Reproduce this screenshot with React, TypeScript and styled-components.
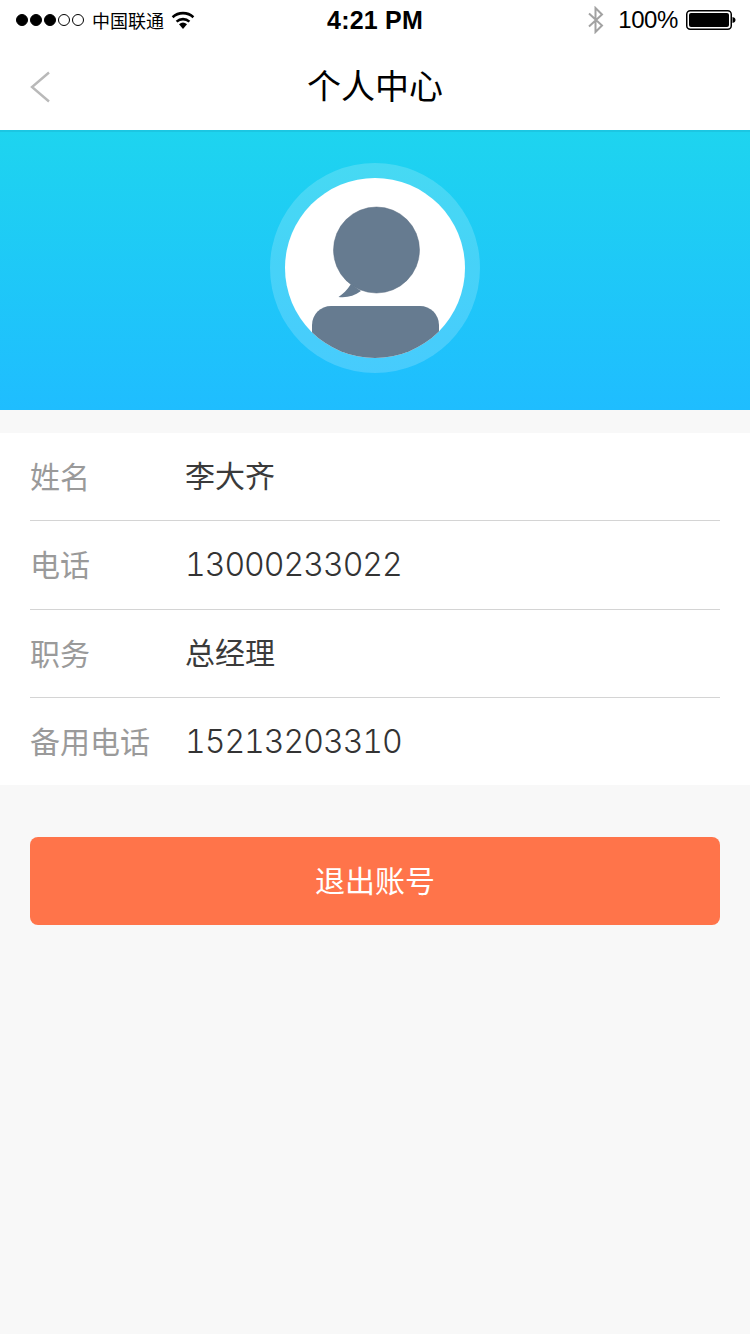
import React from 'react';
import styled, { createGlobalStyle } from 'styled-components';

const GlobalStyle = createGlobalStyle`
  html, body {
    margin: 0;
    padding: 0;
    background: #f8f8f8;
  }
  body {
    font-family: "Liberation Sans", "Noto Sans CJK SC", sans-serif;
  }
`;

const Page = styled.div`
  width: 750px;
  height: 1334px;
  background: #f8f8f8;
  overflow: hidden;
`;

const StatusBar = styled.div`
  height: 40px;
  background: #fff;
  display: grid;
  grid-template-columns: 1fr auto 1fr;
  align-items: center;
  padding: 0 14px 0 16px;
  color: #000;
`;

const StatusLeft = styled.div`
  display: flex;
  align-items: center;
`;

const StatusRight = styled.div`
  display: flex;
  align-items: center;
  justify-content: flex-end;
`;

const Signal = styled.div`
  display: flex;
  gap: 2px;
  margin-right: 8px;
`;

const Dot = styled.span<{ $on: boolean }>`
  width: 12px;
  height: 12px;
  box-sizing: border-box;
  border-radius: 50%;
  border: 1px solid #000;
  background: ${(p) => (p.$on ? '#000' : 'transparent')};
`;

const Carrier = styled.span`
  font-size: 18px;
  margin-right: 7px;
`;

const Clock = styled.span`
  font-size: 25px;
  font-weight: 700;
  letter-spacing: 0.2px;
  margin-left: -2px;
`;

const Percent = styled.span`
  font-size: 24px;
  margin: 0 8px 0 12px;
  letter-spacing: -0.4px;
`;

const NavBar = styled.div`
  height: 90px;
  background: #fff;
  position: relative;
  display: flex;
  align-items: center;
  justify-content: center;
`;

const BackButton = styled.div`
  position: absolute;
  left: 30px;
  top: 31px;
  display: flex;
`;

const NavTitle = styled.h1`
  margin: 0 0 1px;
  font-size: 34px;
  font-weight: 400;
  color: #000;
`;

const Hero = styled.div`
  height: 280px;
  box-sizing: border-box;
  padding-top: 33px;
  display: flex;
  justify-content: center;
  align-items: flex-start;
  background: linear-gradient(180deg, #1ed4ef 0%, #1fbdff 100%);
  border-top: 2px solid #1cc6e2;
`;

const AvatarRing = styled.div`
  width: 210px;
  height: 210px;
  margin-top: -2px;
  border-radius: 50%;
  background: rgba(255, 255, 255, 0.18);
  display: flex;
  align-items: center;
  justify-content: center;
`;

const AvatarDisc = styled.div`
  width: 180px;
  height: 180px;
  border-radius: 50%;
  background: #fff;
  display: flex;
`;

const InfoList = styled.div`
  margin-top: 23px;
  background: #fff;
  padding-left: 30px;
  padding-right: 30px;
`;

const InfoRow = styled.div<{ $height: number; $last?: boolean }>`
  height: ${(p) => p.$height}px;
  box-sizing: border-box;
  display: flex;
  align-items: center;
  border-bottom: ${(p) => (p.$last ? 'none' : '1px solid #d4d4d4')};
`;

const Label = styled.span`
  width: 155px;
  font-size: 30px;
  color: #9a9a9a;
  flex-shrink: 0;
  margin-top: -4px;
`;

const Value = styled.span<{ $digits?: boolean }>`
  font-size: ${(p) => (p.$digits ? '32px' : '30px')};
  color: ${(p) => (p.$digits ? '#333' : '#3a3a3a')};
  ${(p) =>
    p.$digits
      ? 'font-family: "Inter", "Liberation Sans", sans-serif; font-weight: 300; font-variant-numeric: tabular-nums; letter-spacing: -1px; margin-top: -1px;'
      : 'margin-top: -6px;'}
`;

const LogoutButton = styled.button`
  display: block;
  width: 690px;
  height: 88px;
  margin: 52px 30px 0;
  padding: 0 0 4px;
  border: none;
  border-radius: 8px;
  background: #ff744a;
  color: #fff;
  font-family: inherit;
  font-size: 30px;
`;

const rows = [
  { label: '姓名', value: '李大齐', height: 88 },
  { label: '电话', value: '13000233022', digits: true, height: 89 },
  { label: '职务', value: '总经理', height: 88 },
  { label: '备用电话', value: '15213203310', digits: true, height: 87 },
];

const WifiIcon = () => (
  <svg width="24" height="18" viewBox="0 0 24 18">
    <path d="M12 18 L8 13.2 A6.4 6.4 0 0 1 16 13.2 Z" fill="#000" />
    <path d="M5.6 10.6 A9.6 9.6 0 0 1 18.4 10.6" fill="none" stroke="#000" strokeWidth="2.6" />
    <path d="M1.6 6.2 A15.4 15.4 0 0 1 22.4 6.2" fill="none" stroke="#000" strokeWidth="2.6" />
  </svg>
);

const BluetoothIcon = () => (
  <svg width="20" height="28" viewBox="0 0 20 28">
    <path d="M3 7.5 L16 19.5 L9.5 26 V2 L16 8.5 L3 20.5" fill="none" stroke="#a2a2a2" strokeWidth="2" />
  </svg>
);

const BatteryIcon = () => (
  <svg width="50" height="20" viewBox="0 0 50 20">
    <rect x="0.75" y="0.75" width="44.5" height="18.5" rx="3.5" fill="#fff" stroke="#000" strokeWidth="1.5" />
    <rect x="3" y="3" width="40" height="14" rx="2" fill="#000" />
    <path d="M46.5 7 C48.5 7.3 49.5 8.5 49.5 10 C49.5 11.5 48.5 12.7 46.5 13 Z" fill="#000" />
  </svg>
);

const BackIcon = () => (
  <svg width="20" height="32" viewBox="0 0 20 32">
    <path d="M19 1.5 L2 16 L19 30.5" fill="none" stroke="#b9b9b9" strokeWidth="2.4" />
  </svg>
);

const AvatarIcon = () => (
  <svg width="180" height="180" viewBox="0 0 180 180">
    <defs>
      <clipPath id="avatar-clip">
        <circle cx="90" cy="90" r="90" />
      </clipPath>
    </defs>
    <circle cx="91.5" cy="72" r="43" fill="#667b90" stroke="#5a6c80" strokeWidth="0.5" />
    <path d="M66 106 C62 112 58 116 53.5 119 C62 120 69 118 76 113 Z" fill="#667b90" />
    <g clipPath="url(#avatar-clip)">
      <rect x="27" y="128" width="127" height="80" rx="19" fill="#667b90" />
    </g>
  </svg>
);

export default function App() {
  return (
    <Page>
      <GlobalStyle />
      <StatusBar>
        <StatusLeft>
          <Signal>
            {[true, true, true, false, false].map((on, i) => (
              <Dot key={i} $on={on} />
            ))}
          </Signal>
          <Carrier>中国联通</Carrier>
          <WifiIcon />
        </StatusLeft>
        <Clock>4:21 PM</Clock>
        <StatusRight>
          <BluetoothIcon />
          <Percent>100%</Percent>
          <BatteryIcon />
        </StatusRight>
      </StatusBar>
      <NavBar>
        <BackButton>
          <BackIcon />
        </BackButton>
        <NavTitle>个人中心</NavTitle>
      </NavBar>
      <Hero>
        <AvatarRing>
          <AvatarDisc>
            <AvatarIcon />
          </AvatarDisc>
        </AvatarRing>
      </Hero>
      <InfoList>
        {rows.map((row, i) => (
          <InfoRow key={row.label} $height={row.height} $last={i === rows.length - 1}>
            <Label>{row.label}</Label>
            <Value $digits={row.digits}>{row.value}</Value>
          </InfoRow>
        ))}
      </InfoList>
      <LogoutButton>退出账号</LogoutButton>
    </Page>
  );
}
